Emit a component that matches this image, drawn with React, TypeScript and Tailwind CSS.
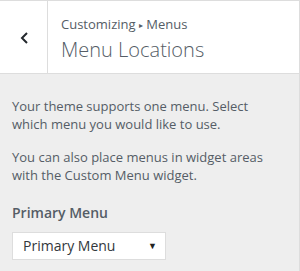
export default function App() {
  return (
    <div className="w-[300px] h-[271px] bg-[#eeeeee] border-t border-r border-[#dddddd] overflow-hidden" style={{ fontFamily: '"Open Sans", sans-serif' }}>
      <div className="flex h-[73px] bg-white border-b border-[#dddddd]">
        <div className="w-[48px] border-r border-[#dddddd] flex items-center justify-center">
          <svg width="12" height="14" viewBox="0 0 12 14" className="ml-[2px] mt-[2px]">
            <path d="M8 2 L3 7 L8 12" fill="none" stroke="#23282d" strokeWidth="2" />
          </svg>
        </div>
        <div className="pl-[13px] pt-[14px] flex flex-col">
          <div className="text-[13px] leading-[18px] text-[#555d66]">Customizing <span className="text-[8px] relative -top-[1px]">▸</span> Menus</div>
          <div className="text-[20px] leading-[26px] font-light text-[#555d66] mt-[2px]">Menu Locations</div>
        </div>
      </div>
      <div className="px-[12px] pt-[23px] text-[13px] leading-[18px] text-[#555d66]">
        <p>Your theme supports one menu. Select which menu you would like to use.</p>
        <p className="mt-[15px]">You can also place menus in widget areas with the Custom Menu widget.</p>
        <div className="mt-[19px] text-[14px] font-semibold leading-[20px] text-[#555d66]">Primary Menu</div>
        <div className="mt-[9px] w-[154px] h-[28px] bg-white border border-[#dddddd] flex items-center justify-between pl-[10px] pr-[8px] text-[14px] text-[#32373c]">
          <span>Primary Menu</span>
          <span className="text-[9px] text-[#222]">▼</span>
        </div>
      </div>
    </div>
  );
}
